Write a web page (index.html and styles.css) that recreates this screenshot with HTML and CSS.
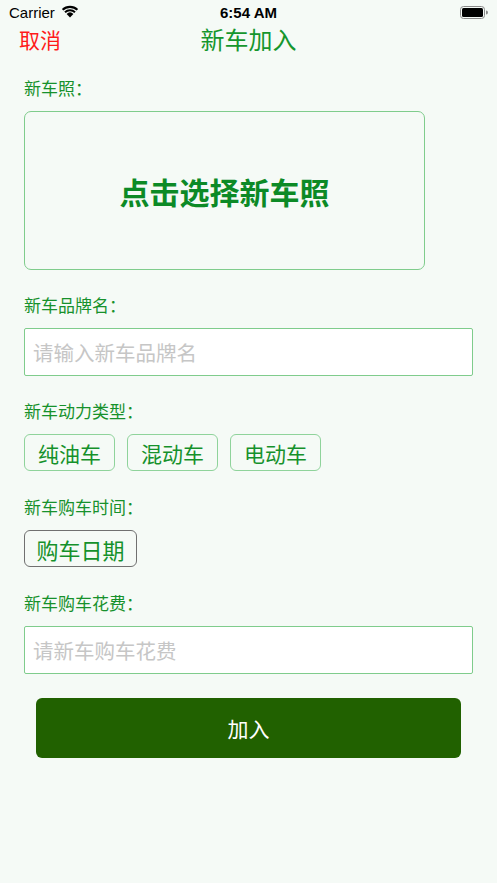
FILE: index.html
```html
<!DOCTYPE html>
<html lang="zh">
<head>
<meta charset="utf-8">
<link rel="stylesheet" href="styles.css">
</head>
<body>
<div class="screen">
  <div class="status">
    <div class="status-left">
      <span class="carrier">Carrier</span>
      <svg class="wifi" width="18" height="13" viewBox="0 0 18 13">
        <path d="M9 12.5 L5.6 8.9 A5 5 0 0 1 12.4 8.9 Z" fill="#000"/>
        <path d="M3.3 6.6 A8.2 8.2 0 0 1 14.7 6.6 L13.3 8.1 A6.2 6.2 0 0 0 4.7 8.1 Z" fill="#000"/>
        <path d="M0.9 4.1 A11.6 11.6 0 0 1 17.1 4.1 L15.7 5.6 A9.6 9.6 0 0 0 2.3 5.6 Z" fill="#000"/>
      </svg>
    </div>
    <div class="time">6:54 AM</div>
    <div class="status-right">
      <svg width="28" height="13" viewBox="0 0 28 13">
        <rect x="0.5" y="0.5" width="24" height="12" rx="3" ry="3" fill="none" stroke="#8a8a8a" stroke-width="1"/>
        <rect x="2" y="2" width="21" height="9" rx="1.5" ry="1.5" fill="#000"/>
        <path d="M26 4.5 a1.5 1.5 0 0 1 0 4 Z" fill="#8a8a8a"/>
      </svg>
    </div>
  </div>
  <div class="nav">
    <span class="cancel">取消</span>
    <span class="title">新车加入</span>
  </div>
  <div class="content">
    <div class="label">新车照：</div>
    <div class="photo">点击选择新车照</div>

    <div class="label">新车品牌名：</div>
    <div class="input"><span class="placeholder">请输入新车品牌名</span></div>

    <div class="label">新车动力类型：</div>
    <div class="chips">
      <div class="chip">纯油车</div>
      <div class="chip">混动车</div>
      <div class="chip">电动车</div>
    </div>

    <div class="label">新车购车时间：</div>
    <div class="chips">
      <div class="chip chip-date">购车日期</div>
    </div>

    <div class="label">新车购车花费：</div>
    <div class="input"><span class="placeholder">请新车购车花费</span></div>

    <div class="submit">加入</div>
  </div>
</div>
</body>
</html>
```

FILE: styles.css
```css
* { box-sizing: border-box; }
html, body { margin: 0; padding: 0; }
body {
  background: #f5faf6;
  font-family: "Noto Sans CJK SC", "Noto Sans", sans-serif;
  width: 497px;
  height: 883px;
  overflow: hidden;
}
.screen { display: flex; flex-direction: column; }
.status {
  height: 24px;
  display: flex;
  align-items: center;
  justify-content: space-between;
  padding: 0 9px 0 9px;
  position: relative;
  font-family: "Liberation Sans", Arial, sans-serif;
  color: #000;
}
.status-left { display: flex; align-items: center; gap: 6px; }
.carrier { font-size: 15px; }
.wifi { margin-top: -1px; }
.time {
  position: absolute;
  left: 0; right: 0;
  text-align: center;
  font-size: 15px;
  font-weight: bold;
  pointer-events: none;
}
.status-right { display: flex; align-items: center; padding-top: 1px; }
.nav {
  height: 30px;
  position: relative;
  display: flex;
  align-items: center;
}
.cancel {
  color: #ff1a1a;
  font-size: 21px;
  line-height: 30px;
  margin-left: 19px;
}
.title {
  position: absolute;
  left: 0; right: 0;
  text-align: center;
  color: #15962d;
  font-size: 24px;
  line-height: 30px;
}
.content {
  padding: 22px 24px 0 24px;
  display: flex;
  flex-direction: column;
}
.label {
  font-size: 17px;
  line-height: 24px;
  color: #17912c;
  margin-bottom: 11px;
}
.photo {
  width: 401px;
  height: 159px;
  border: 1px solid #7fcc8c;
  border-radius: 7px;
  display: flex;
  align-items: center;
  justify-content: center;
  font-size: 30px;
  font-weight: bold;
  color: #0c8a26;
  margin-bottom: 23px;
}
.input {
  height: 48px;
  background: #fff;
  border: 1px solid #7fcc8c;
  border-radius: 2px;
  display: flex;
  align-items: center;
  padding-left: 8px;
  margin-bottom: 23px;
}
.placeholder {
  font-size: 20.5px;
  color: #c6c6c6;
}
.chips {
  display: flex;
  gap: 12px;
  margin-bottom: 24px;
}
.chip {
  width: 91px;
  height: 37px;
  border: 1px solid #8fd39b;
  border-radius: 6px;
  display: flex;
  align-items: center;
  justify-content: center;
  font-size: 21px;
  color: #15912b;
}
.chip-date {
  width: 113px;
  font-size: 22px;
  border-color: #707070;
}
.submit {
  margin: 1px 12px 0 12px;
  height: 60px;
  background: #216100;
  border-radius: 6px;
  color: #fff;
  font-size: 21px;
  display: flex;
  align-items: center;
  justify-content: center;
}
```
